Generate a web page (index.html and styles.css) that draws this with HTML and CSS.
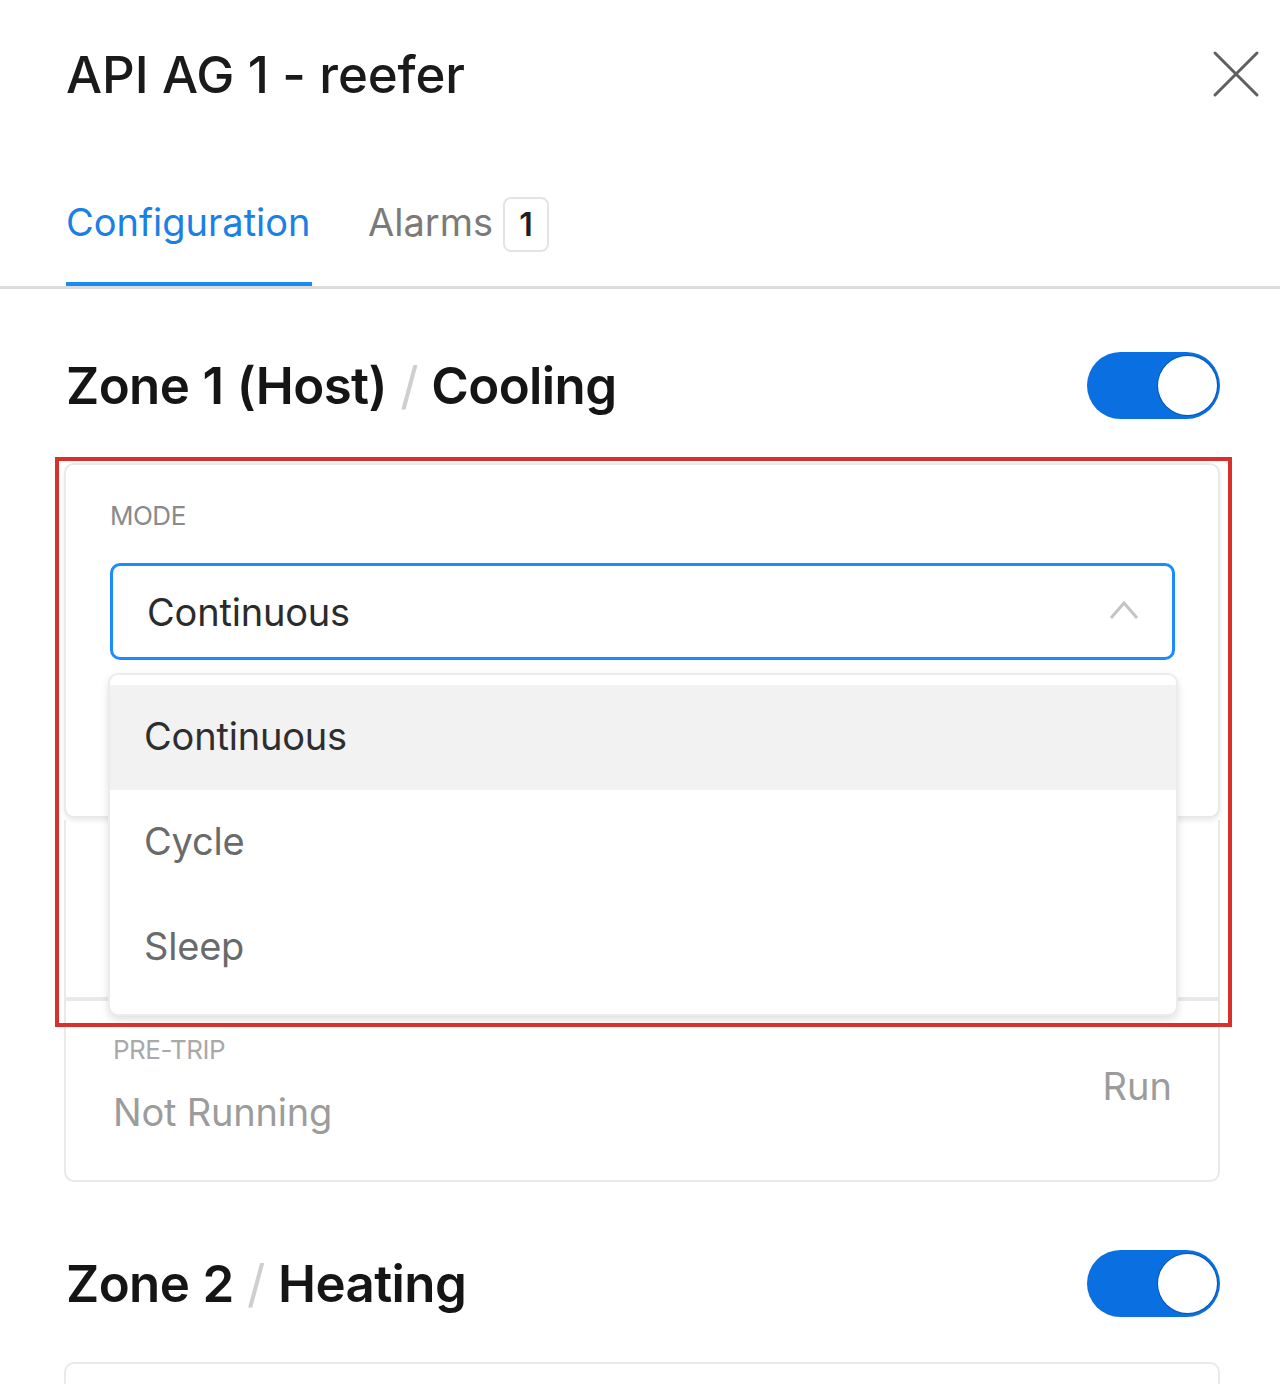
FILE: index.html
```html
<!DOCTYPE html>
<html lang="en">
<head>
<meta charset="utf-8">
<title>API AG 1 - reefer</title>
<link rel="stylesheet" href="styles.css">
</head>
<body>
<div class="panel">
  <header class="header">
    <h1 class="title">API AG 1 - reefer</h1>
    <button class="close" aria-label="Close">
      <svg width="48" height="48" viewBox="0 0 48 48"><path d="M3 3 L45 45 M45 3 L3 45" stroke="#5f5f5f" stroke-width="3" stroke-linecap="round" fill="none"/></svg>
    </button>
  </header>

  <nav class="tabs">
    <div class="tab active">Configuration</div>
    <div class="tab">Alarms <span class="badge">1</span></div>
  </nav>

  <main class="content">
    <section class="zone">
      <div class="zone-head">
        <h2 class="zone-title">Zone 1 (Host) <span class="sep">/</span> Cooling</h2>
        <div class="toggle"><span class="knob"></span></div>
      </div>

      <div class="cards">
        <div class="card card-mode">
          <div class="label">MODE</div>
          <div class="select">
            <span class="select-value">Continuous</span>
            <svg class="chev" width="30" height="20" viewBox="0 0 30 20"><path d="M2 18 L15 3 L28 18" stroke="#c4c4c4" stroke-width="3" fill="none"/></svg>
          </div>
          <ul class="dropdown">
            <li class="opt selected">Continuous</li>
            <li class="opt">Cycle</li>
            <li class="opt">Sleep</li>
          </ul>
        </div>
        <div class="card card-hidden"></div>
        <div class="card card-trip">
          <div class="trip-info">
            <div class="label light">PRE-TRIP</div>
            <div class="trip-value">Not Running</div>
          </div>
          <div class="run">Run</div>
        </div>
        <div class="annotation"></div>
      </div>
    </section>

    <section class="zone zone2">
      <div class="zone-head">
        <h2 class="zone-title">Zone 2 <span class="sep">/</span> Heating</h2>
        <div class="toggle"><span class="knob"></span></div>
      </div>
      <div class="cards">
        <div class="card card-next"></div>
      </div>
    </section>
  </main>
</div>
</body>
</html>
```

FILE: styles.css
```css
* { box-sizing: border-box; }
html, body { margin: 0; padding: 0; background: #fff; }
body {
  font-family: Inter, "Noto Sans", "Liberation Sans", sans-serif;
  color: #1b1b1b;
  width: 1280px;
  height: 1384px;
  overflow: hidden;
}
.panel { width: 1280px; }

.header {
  display: flex;
  justify-content: space-between;
  align-items: center;
  padding: 46px 20px 0 66px;
  height: 104px;
}
.title {
  margin: 0;
  font-size: 51px;
  font-weight: 500;
  letter-spacing: -0.1px;
  line-height: 60px;
  color: #1a1a1a;
}
.close {
  background: none;
  border: 0;
  padding: 0;
  width: 48px;
  height: 48px;
  margin-top: -2px;
}

.tabs {
  display: flex;
  gap: 56px;
  padding-left: 66px;
  margin-top: 90px;
  border-bottom: 3px solid #dcdcdc;
  height: 95px;
}
.tab {
  display: flex;
  align-items: flex-start;
  font-size: 38px;
  line-height: 48px;
  color: #7a7a7a;
  height: 92px;
  padding-top: 4px;
}
.tab.active {
  color: #1a80e6;
  border-bottom: 4px solid #1a8cf0;
  width: 246px;
}
.badge {
  display: inline-flex;
  align-items: center;
  justify-content: center;
  width: 46px;
  height: 55px;
  margin-left: 10px;
  margin-top: -1px;
  border: 2px solid #e4e4e4;
  border-radius: 8px;
  font-size: 32px;
  font-weight: 600;
  color: #1e1e1e;
}

.content { padding: 0 60px 0 64px; }

.zone { margin-top: 63px; }
.zone2 { margin-top: 68px; }
.zone-head {
  display: flex;
  justify-content: space-between;
  align-items: center;
  height: 67px;
}
.zone-title {
  margin: 0;
  padding-left: 2px;
  font-size: 51px;
  font-weight: 600;
  letter-spacing: -0.6px;
  word-spacing: 1px;
  color: #151515;
  line-height: 67px;
}
.sep { color: #cfcfcf; font-weight: 400; }

.toggle {
  width: 133px;
  height: 67px;
  border-radius: 34px;
  background: #0a6fe0;
  display: flex;
  align-items: center;
  justify-content: flex-end;
  padding-right: 3px;
}
.knob {
  width: 59px;
  height: 59px;
  border-radius: 50%;
  background: #fff;
  box-shadow: 0 0 0 1px rgba(0, 40, 100, 0.35);
}

.cards {
  position: relative;
  margin-top: 44px;
}
.card {
  border: 2px solid #e9e9e9;
  border-radius: 10px;
  background: #fff;
}
.card-mode {
  position: relative;
  height: 355px;
  padding: 35px 43px 0 44px;
  box-shadow: 0 3px 5px rgba(0, 0, 0, 0.08);
  z-index: 2;
}
.label {
  font-size: 26px;
  line-height: 32px;
  color: #8a8a8a;
  letter-spacing: -0.5px;
}
.label.light { color: #a9a9a9; }
.select {
  margin-top: 31px;
  height: 97px;
  border: 3px solid #1a8cff;
  border-radius: 10px;
  display: flex;
  align-items: center;
  justify-content: space-between;
  padding: 0 33px 0 34px;
}
.select-value {
  font-size: 38px;
  color: #2b2b2b;
  letter-spacing: -0.2px;
}
.chev { margin-top: -4px; }

.dropdown {
  position: absolute;
  left: 42px;
  top: 208px;
  width: 1070px;
  margin: 0;
  padding: 10px 0 14px;
  list-style: none;
  background: #fff;
  border: 2px solid #ececec;
  border-radius: 10px;
  box-shadow: 0 4px 8px rgba(0, 0, 0, 0.12);
}
.opt {
  height: 105px;
  display: flex;
  align-items: center;
  padding-left: 34px;
  padding-bottom: 4px;
  font-size: 38px;
  color: #6a6a6a;
  letter-spacing: -0.2px;
}
.opt.selected { background: #f2f2f2; color: #2e2e2e; }

.card-hidden { height: 179px; margin-top: 2px; border-top: 0; border-radius: 0; }
.card-trip {
  height: 183px;
  border-radius: 0 0 10px 10px;
  display: flex;
  justify-content: space-between;
  align-items: flex-start;
  padding: 33px 46px 0 47px;
}
.trip-value {
  margin-top: 22px;
  font-size: 38px;
  line-height: 48px;
  color: #9c9c9c;
  letter-spacing: -0.2px;
}
.run {
  margin-top: 28px;
  font-size: 38px;
  line-height: 48px;
  color: #9c9c9c;
}

.annotation {
  position: absolute;
  left: -9px;
  top: -6px;
  width: 1177px;
  height: 570px;
  border: 4px solid #d8302d;
  z-index: 3;
  pointer-events: none;
}

.card-next { height: 60px; margin-top: 45px; border-bottom: 0; border-radius: 10px 10px 0 0; }
.zone2 .cards { margin-top: 0; }
```
